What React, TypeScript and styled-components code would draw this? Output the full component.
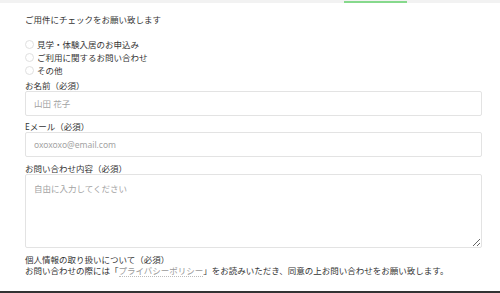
import React from 'react';
import styled, { createGlobalStyle } from 'styled-components';

const GlobalStyle = createGlobalStyle`
  html, body {
    margin: 0;
    padding: 0;
    background: #fff;
  }
  body {
    font-family: "Noto Sans", "Noto Sans CJK JP", sans-serif;
    color: #333;
  }
  * {
    box-sizing: border-box;
  }
`;

const TopBar = styled.div`
  display: flex;
  align-items: flex-end;
  height: 3px;
  background: #f2f2f2;
`;

const TabIndicator = styled.div`
  margin-left: 344px;
  width: 63px;
  height: 2px;
  background: #86d98c;
`;

const Form = styled.form`
  display: flex;
  flex-direction: column;
  padding: 10px 18px 0 25px;
  font-size: 8.5px;
`;

const Heading = styled.p`
  margin: 0;
  line-height: 13px;
`;

const RadioGroup = styled.div`
  display: flex;
  flex-direction: column;
  margin-top: 12px;
`;

const RadioRow = styled.label`
  display: flex;
  align-items: center;
  gap: 3px;
  height: 13px;
  line-height: 13px;
`;

const Radio = styled.input.attrs({ type: 'radio' })`
  appearance: none;
  margin: 0;
  width: 9px;
  height: 9px;
  border: 1px solid #e0e0e0;
  border-radius: 50%;
  background: #fff;
`;

const Field = styled.div<{ $gap: number }>`
  display: flex;
  flex-direction: column;
  margin-top: ${({ $gap }) => $gap}px;
`;

const FieldLabel = styled.label`
  line-height: 11px;
`;

const TextInput = styled.input`
  height: 25px;
  padding: 0 8px;
  border: 1px solid #e3e3e3;
  border-radius: 2px;
  font: inherit;
  color: #333;
  outline: none;

  &::placeholder {
    color: #a3a3a3;
  }
`;

const TextArea = styled.textarea`
  display: block;
  height: 74px;
  padding: 8px;
  border: 1px solid #e3e3e3;
  border-radius: 2px;
  font: inherit;
  line-height: 11px;
  color: #333;
  outline: none;

  &::placeholder {
    color: #a3a3a3;
  }
`;

const Notice = styled.p`
  margin: 0;
  line-height: 12px;
`;

const PolicyLink = styled.a`
  color: #999;
  text-decoration: none;
  border-bottom: 1px dotted #bbb;
`;

const Footer = styled.footer`
  margin-top: 14px;
  height: 2px;
  background: #333;
`;

const options = ['見学・体験入居のお申込み', 'ご利用に関するお問い合わせ', 'その他'];

export default function App() {
  return (
    <>
      <GlobalStyle />
      <TopBar>
        <TabIndicator />
      </TopBar>
      <Form>
        <Heading>ご用件にチェックをお願い致します</Heading>
        <RadioGroup>
          {options.map((option) => (
            <RadioRow key={option}>
              <Radio name="purpose" />
              {option}
            </RadioRow>
          ))}
        </RadioGroup>
        <Field $gap={3}>
          <FieldLabel>お名前（必須）</FieldLabel>
          <TextInput placeholder="山田 花子" />
        </Field>
        <Field $gap={5}>
          <FieldLabel>Eメール（必須）</FieldLabel>
          <TextInput type="email" placeholder="oxoxoxo@email.com" />
        </Field>
        <Field $gap={6}>
          <FieldLabel>お問い合わせ内容（必須）</FieldLabel>
          <TextArea placeholder="自由に入力してください" />
        </Field>
        <Field $gap={6}>
          <FieldLabel>個人情報の取り扱いについて（必須）</FieldLabel>
          <Notice>
            お問い合わせの際には「<PolicyLink href="#">プライバシーポリシー</PolicyLink>
            」をお読みいただき、同意の上お問い合わせをお願い致します。
          </Notice>
        </Field>
      </Form>
      <Footer />
    </>
  );
}
